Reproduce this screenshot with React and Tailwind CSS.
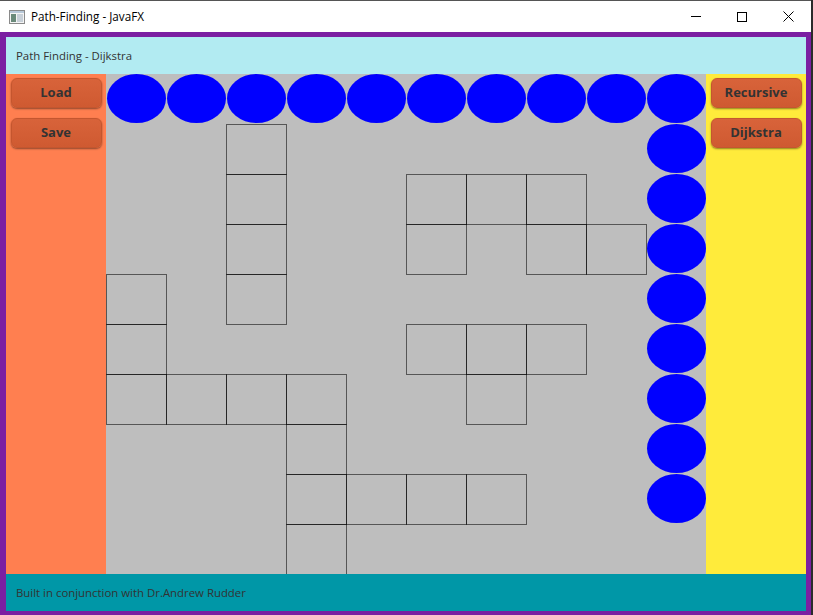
import React from 'react';

const walls = new Set([
  '1-2', '2-2', '3-2', '4-2',
  '2-5', '2-6', '2-7', '3-5', '3-7', '3-8',
  '4-0', '5-0', '6-0', '6-1', '6-2', '6-3',
  '5-5', '5-6', '5-7', '6-6',
  '7-3', '8-3', '8-4', '8-5', '8-6', '9-3',
]);

const path = new Set([
  '0-0', '0-1', '0-2', '0-3', '0-4', '0-5', '0-6', '0-7', '0-8', '0-9',
  '1-9', '2-9', '3-9', '4-9', '5-9', '6-9', '7-9', '8-9',
]);

function Cell({ r, c }) {
  const key = `${r}-${c}`;
  if (walls.has(key)) {
    return <div className="w-[61px] h-[51px] border border-black/55" />;
  }
  if (path.has(key)) {
    return (
      <div className="w-[60px] h-[50px] pl-[0.5px] pt-[0.3px]">
        <div className="w-[59px] h-[49px] rounded-[50%] bg-[#0000ff]" />
      </div>
    );
  }
  return <div className="w-[60px] h-[50px]" />;
}

function Btn({ label }) {
  return (
    <button className="w-[91px] h-[30px] rounded-[6px] bg-gradient-to-b from-[#d8633a] to-[#cf5a31] text-[13px] font-bold text-[#333] shadow-[0_1px_2px_rgba(0,0,0,0.45)] border border-[#c4562f] leading-none pb-[2px]">
      {label}
    </button>
  );
}

export default function App() {
  const rows = Array.from({ length: 10 }, (_, i) => i);
  return (
    <div className="w-[813px] h-[615px] flex flex-col bg-[#2b2b2b] font-['Open_Sans',sans-serif] overflow-hidden">
      <div className="h-[32px] mr-[2px] bg-white flex items-center border-t border-[#555]">
        <svg width="16" height="14" viewBox="0 0 16 14" className="ml-[9px]">
          <rect x="0.5" y="0.5" width="15" height="13" fill="#f4f4f4" stroke="#8a8a8a" />
          <rect x="1" y="1" width="14" height="2" fill="#b8c8d8" />
          <rect x="2" y="4" width="5" height="8" fill="#6a8a7a" />
          <rect x="8" y="4" width="6" height="8" fill="#c8d0d8" />
        </svg>
        <span className="ml-[6px] text-[11.7px] text-black">Path-Finding - JavaFX</span>
        <div className="ml-auto flex items-center">
          <div className="w-[46px] h-[31px] flex items-center justify-center">
            <div className="w-[10px] h-px bg-black" />
          </div>
          <div className="w-[46px] h-[31px] flex items-center justify-center">
            <div className="w-[10px] h-[10px] border border-black" />
          </div>
          <div className="w-[46px] h-[31px] flex items-center justify-center">
            <svg width="11" height="11" viewBox="0 0 11 11">
              <path d="M0.5 0.5 L10.5 10.5 M10.5 0.5 L0.5 10.5" stroke="#000" strokeWidth="1" />
            </svg>
          </div>
        </div>
      </div>
      <div className="flex-1 mr-[2px] bg-[#7b1fa2] pl-[6px] pr-[5px] pt-[5px] pb-[4px] flex flex-col">
        <div className="h-[37px] bg-[#b2ebf2] flex items-center px-[10px] text-[11.4px] text-[#333]">
          Path Finding - Dijkstra
        </div>
        <div className="h-[500px] flex">
          <div className="w-[100px] bg-[#ff7f50] flex flex-col items-center gap-[10px] pt-[4px]">
            <Btn label="Load" />
            <Btn label="Save" />
          </div>
          <div className="w-[600px] bg-[#bebebe] grid grid-cols-[repeat(10,60px)] grid-rows-[repeat(10,50px)]">
            {rows.map((r) => rows.map((c) => <Cell key={`${r}-${c}`} r={r} c={c} />))}
          </div>
          <div className="w-[100px] bg-[#ffeb3b] flex flex-col items-center gap-[10px] pt-[4px]">
            <Btn label="Recursive" />
            <Btn label="Dijkstra" />
          </div>
        </div>
        <div className="h-[37px] bg-[#0097a7] flex items-center px-[10px] text-[11.4px] text-[#333]">
          Built in conjunction with Dr.Andrew Rudder
        </div>
      </div>
    </div>
  );
}
